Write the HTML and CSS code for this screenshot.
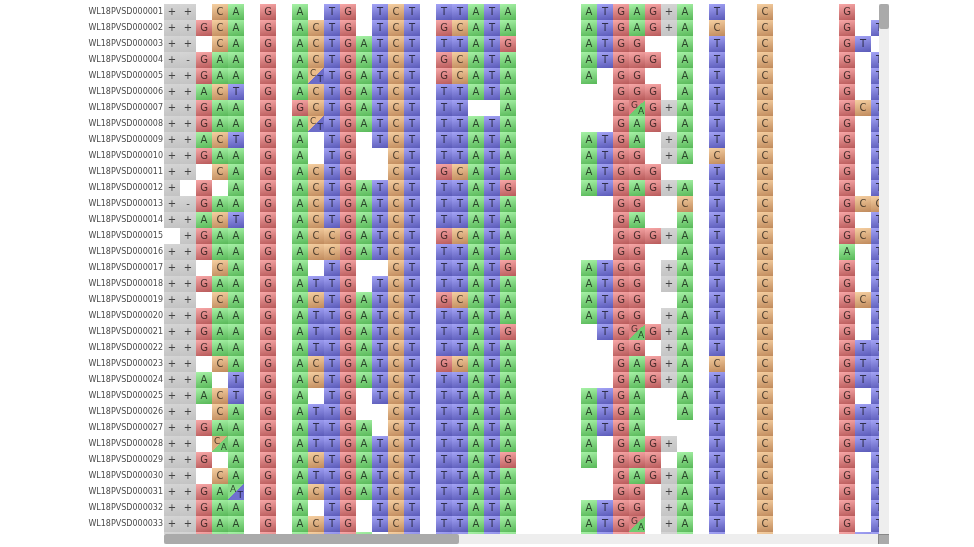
FILE: index.html
```html
<!DOCTYPE html>
<html lang="en">
<head>
	<meta charset="UTF-8">
	<title>Variant matrix</title>
	<link rel="stylesheet" href="styles.css">
</head>
<body>
	<div class="viewer">
		<div class="labels" id="labels"></div>
		<div class="matrix" id="matrix"></div>
		<div class="vbar"><div class="vthumb"></div></div>
		<div class="hgap"></div>
		<div class="hbar"><div class="hthumb"></div></div>
		<div class="corner"></div>
	</div>
	<script src="script.js"></script>
</body>
</html>
```

FILE: styles.css
```css
*{
	margin: 0;
	padding: 0;
	box-sizing: border-box;
}
body{
	background: #fff;
	font-family: "DejaVu Sans", sans-serif;
	padding-top: 4px;
}
.viewer{
	display: grid;
	grid-template-columns: 164px 715px 10px;
	grid-template-rows: 530px 10px;
	width: 889px;
}
.labels{
	overflow: hidden;
	font-size: 8px;
	line-height: 16px;
	color: #4a4a4a;
	text-align: right;
	padding-right: 1px;
	filter: blur(.3px);
}
.label{
	height: 16px;
}
.matrix{
	overflow: hidden;
}
.row{
	display: grid;
	grid-template-columns:
		repeat(5, 16px) 16px
		16px 16px
		repeat(8, 16px) 16px
		repeat(5, 16px) 65px
		repeat(7, 16px) 16px
		16px 32px
		16px 66px
		repeat(3, 16px);
	width: max-content;
	height: 16px;
	filter: blur(.3px);
}
.cell{
	height: 16px;
	font-size: 10px;
	line-height: 16px;
	text-align: center;
	color: rgba(0, 0, 0, .68);
}
.base-a{
	background: linear-gradient(170deg, #a8f2a8, #58b858);
}
.base-c{
	background: linear-gradient(170deg, #f6d0a2, #c08a5c);
}
.base-g{
	background: linear-gradient(170deg, #f8a8a8, #b85a5a);
}
.base-t{
	background: linear-gradient(170deg, #a4a4f6, #5a5ab8);
}
.base-plus, .base-minus{
	background: linear-gradient(170deg, #d6d6d6, #c2c2c2);
}
/* het calls: two colours split on the diagonal */
.split{
	display: flex;
	justify-content: space-between;
	padding: 0 1px 0 2px;
	font-size: 9px;
	line-height: 10px;
}
.split span:last-child{
	align-self: flex-end;
}
.split-ct{
	background: linear-gradient(135deg, #ecbc8a 50%, #6c6cc8 50%);
}
.split-ga{
	background: linear-gradient(135deg, #dc8282 50%, #70cc70 50%);
}
.split-ca{
	background: linear-gradient(135deg, #dcaa7c 50%, #74d074 50%);
}
.split-at{
	background: linear-gradient(135deg, #88dc88 50%, #7070d0 50%);
}
.vbar{
	background: #eee;
}
.vthumb{
	width: 10px;
	height: 25px;
	background: #aaa;
	border-radius: 2px;
}
.hgap{
	background: #fff;
}
.hbar{
	background: #eee;
}
.hthumb{
	width: 295px;
	height: 10px;
	background: #aaa;
	border-radius: 2px;
}
.corner{
	background: #aaa;
	border-top: 1px solid #888;
	border-left: 1px solid #888;
	margin-left: -1px;
}
```

FILE: script.js
```js
// one string per sample, "." = no call, [XY] = het call, space = gap between sites
var rows = [
	"++.CA G A.TG.TCT TTATA ATGAG+A T C G..",
	"++GCA G ACTG.TCT GCATA ATGAG+A C C G.T",
	"++.CA G ACTGATCT TTATG ATGG..A T C GT.",
	"+-GAA G ACTGATCT GCATA ATGGG.A T C G.T",
	"++GAA G A[CT]TGATCT GCATA A.GG..A T C G.T",
	"++ACT G ACTGATCT TTATA ..GGG.A T C G.T",
	"++GAA G GCTGATCT TT..A ..G[GA]G+A T C GCT",
	"++GAA G A[CT]TGATCT TTATA ..GAG.A T C G.T",
	"++ACT G A.TG.TCT TTATA ATGA.+A T C G.T",
	"++GAA G A.TG..CT TTATA ATGG.+A C C G.T",
	"++.CA G ACTG..CT GCATA ATGGG.. T C G.T",
	"+.G.A G ACTGATCT TTATG ATGAG+A T C G.T",
	"+-GAA G ACTGATCT TTATA ..GG..C T C GCC",
	"++ACT G ACTGATCT TTATA ..GA..A T C G.T",
	".+GAA G ACCGATCT GCATA ..GGG+A T C GCT",
	"++GAA G ACCGATCT TTATA ..GG..A T C A.T",
	"++.CA G A.TG..CT TTATG ATGG.+A T C G.T",
	"++GAA G ATTG.TCT TTATA ATGG.+A T C G.T",
	"++.CA G ACTGATCT GCATA ATGG..A T C GCT",
	"++GAA G ATTGATCT TTATA ATGG.+A T C G.T",
	"++GAA G ATTGATCT TTATG .TG[GA]G+A T C G.T",
	"++GAA G ATTGATCT TTATA ..GG.+A T C GTT",
	"++.CA G ACTGATCT GCATA ..GAG+A C C GTT",
	"++A.T G ACTGATCT TTATA ..GAG+A T C GTT",
	"++ACT G A.TG.TCT TTATA ATGA..A T C G.T",
	"++.CA G ATTG..CT TTATA ATGA..A T C GTT",
	"++GAA G ATTGA.CT TTATA ATGA... T C GTT",
	"++.[CA]A G ATTGATCT TTATA A.GAG+. T C GTT",
	"++G.A G ACTGATCT TTATG A.GGG.A T C G.T",
	"++.CA G ATTGATCT TTATA ..GAG+A T C G.T",
	"++GA[AT] G ACTGATCT TTATA ..GG.+A T C G.T",
	"++GAA G A.TG.TCT TTATA ATGG.+A T C G.T",
	"++GAA G ACTG.TCT TTATA ATG[GA].+A T C G.T"
];
// next sample, only its top edge shows above the scrollbar, no text there
var edgeRow = "++GAA G ACTGA.CT TTATA ATGG.+A T C GTT";
var names = { "+": "plus", "-": "minus", "A": "a", "C": "c", "G": "g", "T": "t" };

function makeCell(tok, showText){
	var cell = document.createElement("div");
	if(tok == " " || tok == "."){
		return cell;
	}
	if(tok.length > 1){
		var a = tok[1], b = tok[2];
		cell.className = "cell split split-" + (a + b).toLowerCase();
		cell.innerHTML = "<span>" + a + "</span><span>" + b + "</span>";
		return cell;
	}
	cell.className = "cell base-" + names[tok];
	if(showText){
		cell.textContent = tok;
	}
	return cell;
}

function makeRow(str, showText){
	var row = document.createElement("div");
	row.className = "row";
	var toks = str.match(/\[..\]|./g);
	for(var j = 0; j < toks.length; j++){
		row.appendChild(makeCell(toks[j], showText));
	}
	return row;
}

var labels = document.getElementById("labels");
var matrix = document.getElementById("matrix");
for(var i = 0; i < rows.length; i++){
	var label = document.createElement("div");
	label.className = "label";
	label.textContent = "WL18PVSD" + String(i + 1).padStart(6, "0");
	labels.appendChild(label);
	matrix.appendChild(makeRow(rows[i], true));
}
matrix.appendChild(makeRow(edgeRow, false));
```
